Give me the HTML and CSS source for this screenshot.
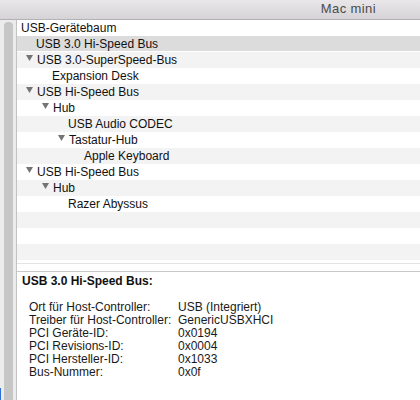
FILE: index.html
```html
<!DOCTYPE html>
<html lang="de">
<head>
<meta charset="utf-8">
<title>Systeminformationen – USB</title>
<link rel="stylesheet" href="styles.css">
</head>
<body>
<div class="window">
  <header class="titlebar"><span class="title">Mac mini</span></header>
  <div class="main">
    <aside class="sidebar"><div class="scroller"></div></aside>
    <section class="content">
      <div class="tree">
        <div class="row head">USB-Gerätebaum</div>
        <div class="row selected lvl1"><span class="label">USB 3.0 Hi-Speed Bus</span></div>
        <div class="row alt lvl1 open"><svg class="tri" viewBox="0 0 7 6" width="7" height="6"><polygon points="0,0 7,0 3.5,6"/></svg><span class="label">USB 3.0-SuperSpeed-Bus</span></div>
        <div class="row lvl2"><span class="label">Expansion Desk</span></div>
        <div class="row alt lvl1 open"><svg class="tri" viewBox="0 0 7 6" width="7" height="6"><polygon points="0,0 7,0 3.5,6"/></svg><span class="label">USB Hi-Speed Bus</span></div>
        <div class="row lvl2 open"><svg class="tri" viewBox="0 0 7 6" width="7" height="6"><polygon points="0,0 7,0 3.5,6"/></svg><span class="label">Hub</span></div>
        <div class="row alt lvl3"><span class="label">USB Audio CODEC</span></div>
        <div class="row lvl3 open"><svg class="tri" viewBox="0 0 7 6" width="7" height="6"><polygon points="0,0 7,0 3.5,6"/></svg><span class="label">Tastatur-Hub</span></div>
        <div class="row alt lvl4"><span class="label">Apple Keyboard</span></div>
        <div class="row lvl1 open"><svg class="tri" viewBox="0 0 7 6" width="7" height="6"><polygon points="0,0 7,0 3.5,6"/></svg><span class="label">USB Hi-Speed Bus</span></div>
        <div class="row alt lvl2 open"><svg class="tri" viewBox="0 0 7 6" width="7" height="6"><polygon points="0,0 7,0 3.5,6"/></svg><span class="label">Hub</span></div>
        <div class="row lvl3"><span class="label">Razer Abyssus</span></div>
        <div class="row alt"></div>
        <div class="row"></div>
        <div class="row alt"></div>
      </div>
      <div class="splitter"></div>
      <div class="details">
        <h2 class="details-title">USB 3.0 Hi-Speed Bus:</h2>
        <dl class="props">
          <dt>Ort für Host-Controller:</dt><dd>USB (Integriert)</dd>
          <dt>Treiber für Host-Controller:</dt><dd>GenericUSBXHCI</dd>
          <dt>PCI Geräte-ID:</dt><dd>0x0194</dd>
          <dt>PCI Revisions-ID:</dt><dd>0x0004</dd>
          <dt>PCI Hersteller-ID:</dt><dd>0x1033</dd>
          <dt>Bus-Nummer:</dt><dd>0x0f</dd>
        </dl>
      </div>
    </section>
  </div>
</div>
</body>
</html>
```
FILE: styles.css
```css
* { box-sizing: border-box; }
html, body { margin: 0; padding: 0; }
body {
  width: 420px;
  height: 400px;
  overflow: hidden;
  background: #fff;
  font-family: "Liberation Sans", Arial, sans-serif;
  font-size: 12px;
  color: #111;
}
.window {
  display: flex;
  flex-direction: column;
  height: 400px;
}
.titlebar {
  height: 20px;
  flex: none;
  display: flex;
  justify-content: flex-end;
  align-items: flex-start;
  padding-right: 44px;
  background: linear-gradient(#e9e7e9, #d5d3d5);
  border-bottom: 1px solid #b3b1b3;
}
.title {
  font-size: 13px;
  line-height: 18px;
  letter-spacing: 0.4px;
  color: #4b4b4b;
}
.main {
  flex: 1;
  display: flex;
  min-height: 0;
}
.sidebar {
  width: 17px;
  flex: none;
  display: flex;
  padding: 2px 3px 0 4px;
  background: linear-gradient(#2b6fd6, #2b6fd6) no-repeat left bottom / 1px 12px, #ececec;
  border-right: 1px solid #c3c3c3;
}
.scroller {
  flex: 1;
  background: #c6c6c6;
  border-radius: 4px 4px 0 0;
}
.content {
  flex: 1;
  display: flex;
  flex-direction: column;
  min-width: 0;
}
.tree {
  padding-bottom: 3px;
  border-bottom: 1px solid #e3e3e3;
}
.row {
  height: 16px;
  line-height: 16px;
  display: flex;
  align-items: flex-start;
  white-space: nowrap;
  color: #111;
}
.row.alt { background: #f3f3f3; }
.row.selected {
  background: #dcdcdc;
  box-shadow: inset 0 -1px 0 #fff;
}
.row.head { padding-left: 4px; }
.lvl1 { padding-left: 19px; }
.lvl2 { padding-left: 35px; }
.lvl3 { padding-left: 51px; }
.lvl4 { padding-left: 67px; }
.open.lvl1 { padding-left: 9px; }
.open.lvl2 { padding-left: 25px; }
.open.lvl3 { padding-left: 41px; }
.tri {
  flex: none;
  margin-top: 3px;
  margin-right: 4px;
  fill: #747474;
}
.splitter {
  height: 8px;
  flex: none;
  border-bottom: 1px solid #c9c9c9;
}
.details {
  flex: 1;
  padding: 1px 0 0 5px;
}
.details-title {
  margin: 0 0 12px;
  font-size: 12px;
  line-height: 16px;
  font-weight: bold;
  color: #111;
}
.props {
  margin: 0;
  padding-left: 7px;
  display: grid;
  grid-template-columns: 149px auto;
  line-height: 13px;
  color: #1a1a1a;
}
.props dt, .props dd { margin: 0; white-space: nowrap; }
```
